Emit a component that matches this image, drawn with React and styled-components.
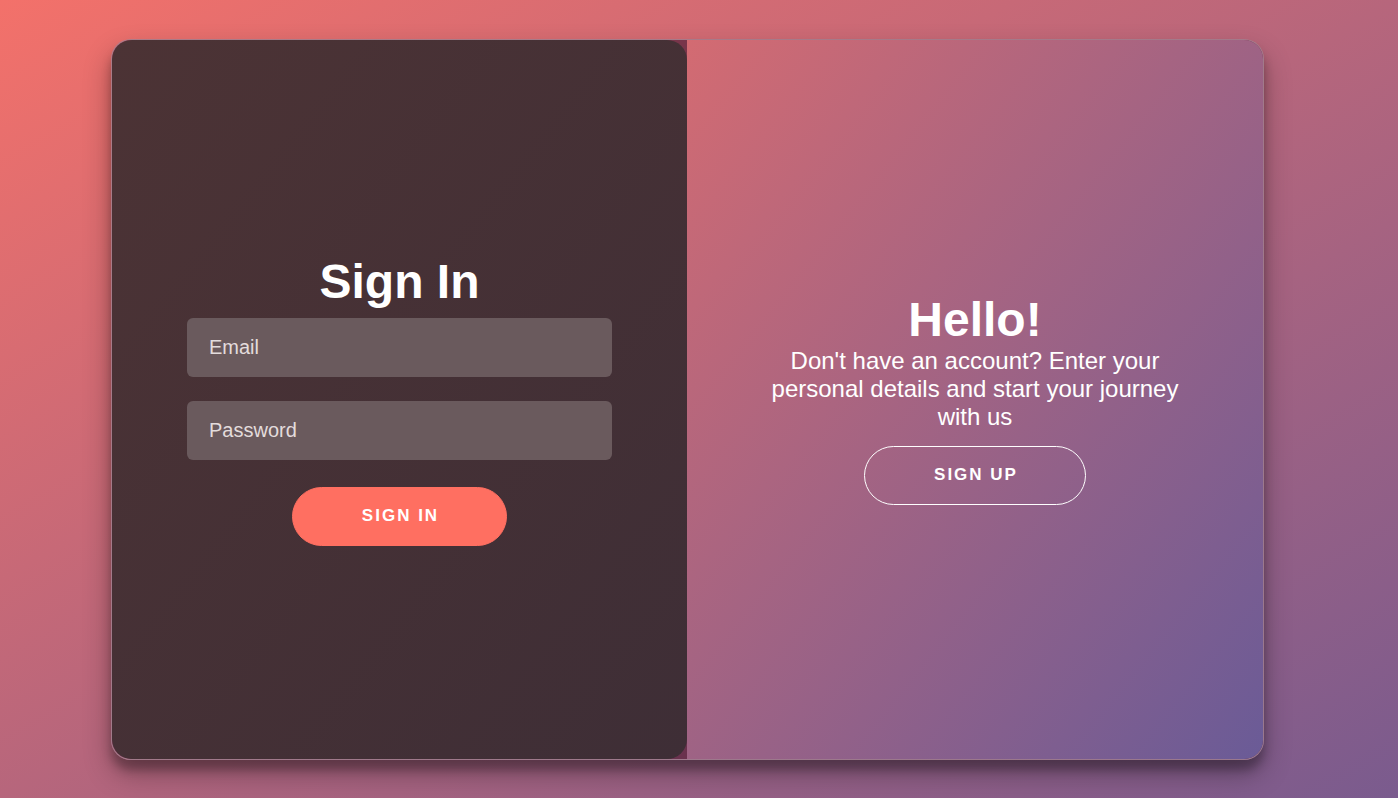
import React from 'react';
import styled, { createGlobalStyle } from 'styled-components';

const GlobalStyle = createGlobalStyle`
  html, body {
    margin: 0;
    padding: 0;
  }
  body {
    font-family: 'Liberation Sans', Arial, sans-serif;
    background: linear-gradient(to bottom right, #f3716a, #7a5b8e);
    min-height: 798px;
  }
`

const Page = styled.div`
  box-sizing: border-box;
  height: 798px;
  padding: 40px 135px 39px 112px;
  display: grid;
`

const Card = styled.div`
  display: grid;
  grid-template-columns: 575px 1fr;
  border-radius: 20px;
  overflow: hidden;
  border: 1px solid rgba(255, 255, 255, 0.35);
  background: rgba(90, 35, 60, 0.75);
  box-shadow: 0 14px 28px rgba(0, 0, 0, 0.3), 0 10px 10px rgba(0, 0, 0, 0.25);
  margin: -1px;
`

const Panel = styled.div`
  display: flex;
  flex-direction: column;
  align-items: center;
  justify-content: center;
  text-align: center;
  color: #fff;
`

const SignInPanel = styled(Panel)`
  background: linear-gradient(to bottom right, #4c3335, #3e2e36);
  border-radius: 20px;
  padding: 0 75px;
`

const HelloPanel = styled(Panel)`
  background: linear-gradient(to bottom right, #d36b72, #6a5b97);
  padding: 0 70px 2px;
`

const Title = styled.h1`
  font-size: 48px;
  font-weight: 700;
  margin: 0 0 ${p => p.$gap || 0}px;
  line-height: ${p => p.$lh || 56}px;
`

const Input = styled.input`
  box-sizing: border-box;
  width: 100%;
  height: 59px;
  margin-bottom: 24px;
  border: none;
  border-radius: 6px;
  background: #6a5a5d;
  padding: 0 22px;
  font-family: 'Liberation Sans', Arial, sans-serif;
  font-size: 20px;
  color: #fff;
  outline: none;
  &::placeholder {
    color: #e3dcdc;
  }
`

const Button = styled.button`
  margin-top: ${p => p.$top || 0}px;
  height: 59px;
  padding: 0 67px 0 69px;
  border-radius: 30px;
  border: 1px solid ${p => (p.$ghost ? '#fff' : '#ff6f61')};
  background: ${p => (p.$ghost ? 'transparent' : '#ff6f61')};
  color: #fff;
  font-family: 'Liberation Sans', Arial, sans-serif;
  font-size: 17px;
  font-weight: 700;
  letter-spacing: 2px;
  text-transform: uppercase;
  cursor: pointer;
`

const Text = styled.p`
  margin: 0;
  font-size: 24px;
  line-height: 28px;
`

const App = () => {
  return (
    <>
      <GlobalStyle />
      <Page>
        <Card>
          <SignInPanel>
            <Title $gap={8}>Sign In</Title>
            <Input type="email" placeholder="Email" />
            <Input type="password" placeholder="Password" />
            <Button $top={3}>Sign In</Button>
          </SignInPanel>
          <HelloPanel>
            <Title $lh={54}>Hello!</Title>
            <Text>Don't have an account? Enter your personal details and start your journey with us</Text>
            <Button $ghost $top={15}>Sign Up</Button>
          </HelloPanel>
        </Card>
      </Page>
    </>
  )
}

export default App
